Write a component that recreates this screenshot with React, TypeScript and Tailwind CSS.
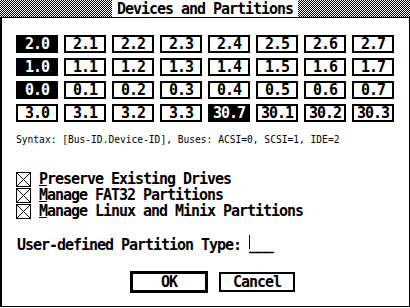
import React from "react";

const rows: { label: string; sel: boolean }[][] = [
  ["2.0", "2.1", "2.2", "2.3", "2.4", "2.5", "2.6", "2.7"].map((l, i) => ({ label: l, sel: i === 0 })),
  ["1.0", "1.1", "1.2", "1.3", "1.4", "1.5", "1.6", "1.7"].map((l, i) => ({ label: l, sel: i === 0 })),
  ["0.0", "0.1", "0.2", "0.3", "0.4", "0.5", "0.6", "0.7"].map((l, i) => ({ label: l, sel: i === 0 })),
  ["3.0", "3.1", "3.2", "3.3", "30.7", "30.1", "30.2", "30.3"].map((l, i) => ({ label: l, sel: i === 4 })),
];

function Check({ first, rest }: { first: string; rest: string }) {
  return (
    <div className="flex items-center h-[16px]">
      <svg width="15" height="15" viewBox="0 0 15 15" className="shrink-0">
        <rect x="0.5" y="0.5" width="14" height="14" fill="white" stroke="black" strokeWidth="1" />
        <line x1="1" y1="1" x2="14" y2="14" stroke="black" strokeWidth="1" />
        <line x1="14" y1="1" x2="1" y2="14" stroke="black" strokeWidth="1" />
      </svg>
      <span className="ml-[8px] whitespace-pre leading-[14px]">
        <span className="underline underline-offset-[1px] decoration-[1px]">{first}</span>
        {rest}
      </span>
    </div>
  );
}

export default function App() {
  return (
    <div className="w-[410px] h-[308px] bg-white overflow-hidden text-black font-['DejaVu_Sans_Mono',monospace] font-bold text-[15px] leading-[16px] tracking-[-1.03px]">
      <div className="w-[410px] h-[307px] flex flex-col border-b border-black">
        <div className="h-[18px] shrink-0 border-b border-black flex justify-center bg-[repeating-conic-gradient(#000_0_25%,#fff_0_50%)] bg-[length:2px_2px]">
          <div className="bg-white h-full px-[5px] pt-[1px] whitespace-pre">Devices and Partitions</div>
        </div>
        <div className="flex-1 border-l-2 border-r border-black pl-[14px] flex flex-col">
          <div className="mt-[17px] w-[378px] grid grid-cols-8 gap-x-[6px] gap-y-[5px]">
            {rows.flat().map((c, i) => (
              <div
                key={i}
                className={
                  c.sel
                    ? "h-[18px] bg-black text-white flex items-center justify-center"
                    : "h-[18px] border-2 border-black bg-white flex items-center justify-center"
                }
              >
                {c.label}
              </div>
            ))}
          </div>
          <div className="mt-[14px] font-normal text-[9.6px] leading-[8px] tracking-normal whitespace-pre">
            Syntax: [Bus-ID.Device-ID], Buses: ACSI=0, SCSI=1, IDE=2
          </div>
          <div className="mt-[27px] flex flex-col">
            <Check first="P" rest="reserve Existing Drives" />
            <Check first="M" rest="anage FAT32 Partitions" />
            <Check first="M" rest="anage Linux and Minix Partitions" />
          </div>
          <div className="mt-[18px] h-[16px] flex whitespace-pre pl-[1px]">
            <span>User-defined Partition Type: </span>
            <span className="relative">
              ___
              <span className="absolute left-0 top-[-2px] w-px h-[14px] bg-black" />
            </span>
          </div>
          <div className="mt-[18px] flex justify-center gap-[11px]">
            <div className="w-[78px] h-[22px] border-[3px] border-black flex items-center justify-center">OK</div>
            <div className="w-[76px] h-[20px] mt-[1px] border-2 border-black flex items-center justify-center">Cancel</div>
          </div>
        </div>
      </div>
    </div>
  );
}
